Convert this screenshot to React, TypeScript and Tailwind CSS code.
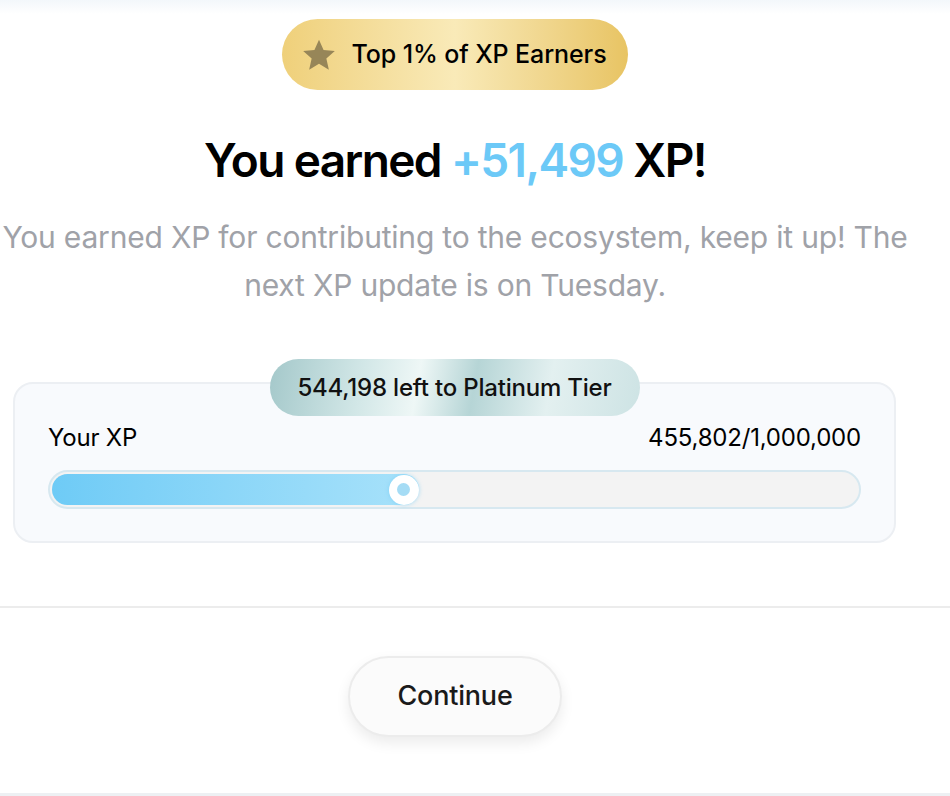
import React from 'react';

const StarIcon: React.FC<{ className?: string }> = ({ className }) => (
    <svg viewBox="0 0 24 24" className={className} fill="currentColor">
        <path d="M12 1.8l3.05 6.9 7.5.7-5.65 5 1.67 7.35L12 17.9l-6.57 3.85L7.1 14.4 1.45 9.4l7.5-.7L12 1.8z" />
    </svg>
);

const App: React.FC = () => {
    const current = 455802;
    const total = 1000000;
    const pct = (current / total) * 100;

    return (
        <div className="w-[950px] h-[796px] bg-white overflow-hidden flex flex-col font-['Inter',sans-serif] text-black">
            {/* top fade */}
            <div className="h-[14px] bg-gradient-to-b from-[#f3f7fb] to-white" />

            <div className="w-[910px] flex flex-col items-center">
                {/* Badge */}
                <div className="mt-[5px] h-[71px] w-[346px] rounded-full bg-gradient-to-r from-[#efd07a] via-[#f9eab8] to-[#e8c463] flex items-center justify-center gap-[14px] pr-[2px]">
                    <StarIcon className="w-[36px] h-[36px] text-[#978658]" />
                    <span className="text-[25px] font-medium tracking-[-0.1px]">Top 1% of XP Earners</span>
                </div>

                {/* Heading */}
                <h1 className="mt-[42px] text-[46px] leading-[56px] font-semibold tracking-[-1.6px]">
                    You earned <span className="text-[#6cc9f7]">+51,499</span> XP!
                </h1>

                <p className="mt-[25px] w-[960px] text-center text-[30px] leading-[48px] text-[#a0a2a8] tracking-[-0.2px]">
                    You earned XP for contributing to the ecosystem, keep it up! The
                    <br />
                    next XP update is on Tuesday.
                </p>

                {/* Progress card */}
                <div className="relative mt-[73px] w-[883px] self-start ml-[13px] rounded-[20px] border-2 border-[#eceff3] bg-[#f8fafd] px-[33px] pt-[36px] pb-[32px]">
                    <div className="absolute -top-[25px] left-1/2 -translate-x-1/2 h-[57px] w-[370px] rounded-full flex items-center justify-center whitespace-nowrap bg-[linear-gradient(100deg,#a4c8ca_0%,#d2e7e7_25%,#eef7f6_40%,#b6d5d6_55%,#e3f0f0_75%,#cde3e4_100%)]">
                        <span className="text-[24px] font-medium tracking-[-0.2px] text-[#111]">544,198 left to Platinum Tier</span>
                    </div>

                    <div className="flex justify-between items-center text-[24px] tracking-[-0.2px]">
                        <span>Your XP</span>
                        <span>455,802/1,000,000</span>
                    </div>

                    <div className="mt-[14px] h-[39px] rounded-full border-2 border-[#d7e8f0] bg-[#f3f3f3] p-[2px] relative">
                        <div
                            className="h-full rounded-full bg-gradient-to-r from-[#6ecbf6] to-[#a8e2fa] relative"
                            style={{ width: `${pct}%` }}
                        >
                            <div className="absolute right-[0px] top-1/2 -translate-y-1/2 w-[30px] h-[30px] rounded-full bg-white flex items-center justify-center shadow-[0_0_4px_rgba(110,200,245,0.6)]">
                                <div className="w-[13px] h-[13px] rounded-full bg-[#a5dcf5]" />
                            </div>
                        </div>
                    </div>
                </div>
            </div>

            {/* Divider */}
            <div className="mt-[63px] h-[2px] w-full bg-[#ececec]" />

            <div className="w-[910px] flex justify-center">
                <button className="mt-[48px] h-[81px] w-[214px] rounded-full bg-[#fbfbfb] border-2 border-[#ececec] shadow-[0_6px_14px_rgba(0,0,0,0.08)] text-[27px] font-medium tracking-[-0.2px] text-[#1a1a1a]">
                    Continue
                </button>
            </div>

            <div className="mt-auto h-[3px] w-full bg-[#edf0f3]" />
        </div>
    );
};

export default App;
